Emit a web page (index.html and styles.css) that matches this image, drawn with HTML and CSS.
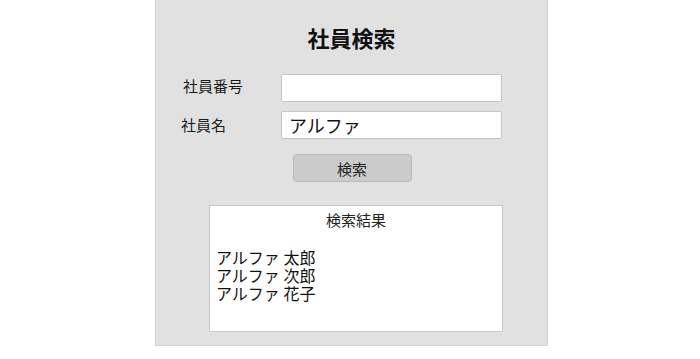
FILE: index.html
```html
<!DOCTYPE html>
<html lang="ja">
<head>
<meta charset="utf-8">
<title>社員検索</title>
<link rel="stylesheet" href="styles.css">
</head>
<body>
<div class="panel">
  <h1 class="title">社員検索</h1>
  <div class="form">
    <label class="label label-no">社員番号</label>
    <input class="field" type="text" value="">
    <label class="label">社員名</label>
    <input class="field" type="text" value="アルファ">
  </div>
  <button class="btn" type="button">検索</button>
  <div class="results">
    <div class="results-title">検索結果</div>
    <ul class="results-list">
      <li>アルファ 太郎</li>
      <li>アルファ 次郎</li>
      <li>アルファ 花子</li>
    </ul>
  </div>
</div>
</body>
</html>
```
FILE: styles.css
```css
html, body {
  margin: 0;
  padding: 0;
  background: #ffffff;
}
body {
  font-family: "Noto Sans CJK JP", "Noto Sans", sans-serif;
  color: #111;
}
.panel {
  box-sizing: border-box;
  width: 393px;
  height: 346px;
  margin: 0 0 0 155px;
  background: #e1e1e1;
  border: 1px solid #d3d3d3;
  border-top: none;
  padding-top: 22px;
  display: flex;
  flex-direction: column;
}
.title {
  margin: 0;
  font-size: 22px;
  line-height: 30px;
  font-weight: 700;
  text-align: center;
  color: #111;
}
.form {
  margin-top: 22px;
  display: grid;
  grid-template-columns: 100px 221px;
  row-gap: 9px;
  padding-left: 25px;
  align-items: center;
}
.label {
  font-size: 15px;
  line-height: 20px;
  color: #1a1a1a;
}
.label-no {
  padding-left: 2px;
  margin-top: -5px;
}
.field {
  box-sizing: border-box;
  height: 28px;
  width: 221px;
  margin: 0;
  border: 1px solid #c4c4c4;
  border-radius: 2px;
  background: #fff;
  padding: 0 7px;
  font-family: "Noto Sans CJK JP", sans-serif;
  font-size: 18px;
  color: #111;
  outline: none;
}
.btn {
  box-sizing: border-box;
  align-self: center;
  margin: 15px 0 0 1px;
  width: 119px;
  height: 28px;
  background: #cbcbcb;
  border: 1px solid #b8b8b8;
  border-radius: 4px;
  font-family: "Noto Sans CJK JP", sans-serif;
  font-size: 15px;
  color: #222;
  padding: 0;
}
.results {
  box-sizing: border-box;
  margin: 23px 0 0 53px;
  width: 294px;
  height: 127px;
  background: #fff;
  border: 1px solid #c8c8c8;
  padding: 4px 6px 0;
}
.results-title {
  font-size: 15px;
  line-height: 20px;
  text-align: center;
  color: #222;
}
.results-list {
  list-style: none;
  margin: 18px 0 0;
  padding: 0;
  font-size: 16px;
  line-height: 18px;
  color: #111;
}
.results-list li {
  height: 18px;
  overflow: visible;
}
```
